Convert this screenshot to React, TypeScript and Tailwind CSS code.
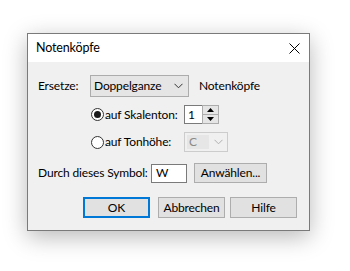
import React from "react";

const Chevron = ({ color = "#333" }: { color?: string }) => (
  <svg width="9" height="6" viewBox="0 0 9 6" fill="none">
    <path d="M0.5 0.8 L4.5 4.8 L8.5 0.8" stroke={color} strokeWidth="1" />
  </svg>
);

const Radio = ({ checked }: { checked?: boolean }) => (
  <div className="w-[13px] h-[13px] rounded-full border border-[#333] bg-white flex items-center justify-center shrink-0">
    {checked && <div className="w-[7px] h-[7px] rounded-full bg-[#1a1a1a]" />}
  </div>
);

export default function App() {
  return (
    <div
      className="w-[350px] h-[271px] bg-white overflow-hidden pt-[33px] pl-[27px] whitespace-nowrap"
      style={{ fontFamily: 'Lato, "Noto Sans", sans-serif' }}
    >
      <div className="w-[283px] h-[198px] border border-[#7a7a7a] flex flex-col shadow-[0_6px_22px_rgba(0,0,0,0.28)] text-[12px] tracking-[-0.15px] text-black leading-none">
        <div className="h-[28px] bg-white flex items-center justify-between pl-[8px] pr-[9px] shrink-0">
          <span className="text-[12.5px]">Notenköpfe</span>
          <svg width="11" height="11" viewBox="0 0 11 11">
            <path d="M0.5 0.5 L10.5 10.5 M10.5 0.5 L0.5 10.5" stroke="#000" strokeWidth="1" />
          </svg>
        </div>
        <div className="flex-1 bg-[#f0f0f0] flex flex-col">
          {/* Row 1 */}
          <div className="flex items-center mt-[13px] pl-[10px] h-[22px]">
            <span className="w-[52px] shrink-0">Ersetze:</span>
            <div className="w-[99px] h-[22px] shrink-0 bg-[#e5e5e5] border border-[#acacac] flex items-center justify-between pl-[3px] pr-[5px]">
              <span>Doppelganze</span>
              <Chevron />
            </div>
            <span className="ml-[10px]">Notenköpfe</span>
          </div>
          {/* Row 2 */}
          <div className="flex items-center mt-[8px] h-[19px] pl-[63px]">
            <Radio checked />
            <span className="ml-[1px] w-[79px] shrink-0">auf Skalenton:</span>
            <div className="flex h-[19px] shrink-0">
              <div className="w-[18px] h-[19px] bg-white border border-[#7a7a7a] border-r-0 flex items-center pl-[3px]">1</div>
              <div className="w-[17px] h-[19px] border border-[#acacac] bg-[#f0f0f0] flex flex-col">
                <div className="flex-1 bg-[#e5e5e5] border-b border-[#acacac] flex items-center justify-center">
                  <svg width="7" height="4" viewBox="0 0 7 4"><path d="M3.5 0 L7 4 L0 4 Z" fill="#000" /></svg>
                </div>
                <div className="flex-1 bg-[#e5e5e5] flex items-center justify-center">
                  <svg width="7" height="4" viewBox="0 0 7 4"><path d="M0 0 L7 0 L3.5 4 Z" fill="#000" /></svg>
                </div>
              </div>
            </div>
          </div>
          {/* Row 3 */}
          <div className="flex items-center mt-[8px] h-[20px] pl-[63px]">
            <Radio />
            <span className="ml-[1px] w-[79px] shrink-0">auf Tonhöhe:</span>
            <div className="w-[44px] h-[20px] shrink-0 border border-[#cccccc] bg-[#f0f0f0] flex items-center justify-between p-[2px] pr-[4px]">
              <div className="w-[22px] h-full bg-[#e6e6e6] flex items-center pl-[2px] text-[#8a8a8a]">C</div>
              <Chevron color="#b0b0b0" />
            </div>
          </div>
          {/* Row 4 */}
          <div className="flex items-center mt-[11px] h-[20px] pl-[10px]">
            <span className="w-[113px] shrink-0">Durch dieses Symbol:</span>
            <div className="w-[36px] h-[19px] shrink-0 bg-white border border-[#7a7a7a] flex items-center pl-[4px]">W</div>
            <div className="ml-[7px] w-[73px] h-[20px] shrink-0 bg-[#e1e1e1] border border-[#adadad] flex items-center justify-center">Anwählen...</div>
          </div>
          {/* Row 5 */}
          <div className="flex items-center mt-[14px] h-[21px] pl-[55px]">
            <div className="w-[67px] h-[21px] shrink-0 bg-[#e1e1e1] border-2 border-[#0078d7] flex items-center justify-center">OK</div>
            <div className="ml-[8px] w-[67px] h-[21px] shrink-0 bg-[#e1e1e1] border border-[#adadad] flex items-center justify-center">Abbrechen</div>
            <div className="ml-[5px] w-[67px] h-[21px] shrink-0 bg-[#e1e1e1] border border-[#adadad] flex items-center justify-center">Hilfe</div>
          </div>
        </div>
      </div>
    </div>
  );
}
